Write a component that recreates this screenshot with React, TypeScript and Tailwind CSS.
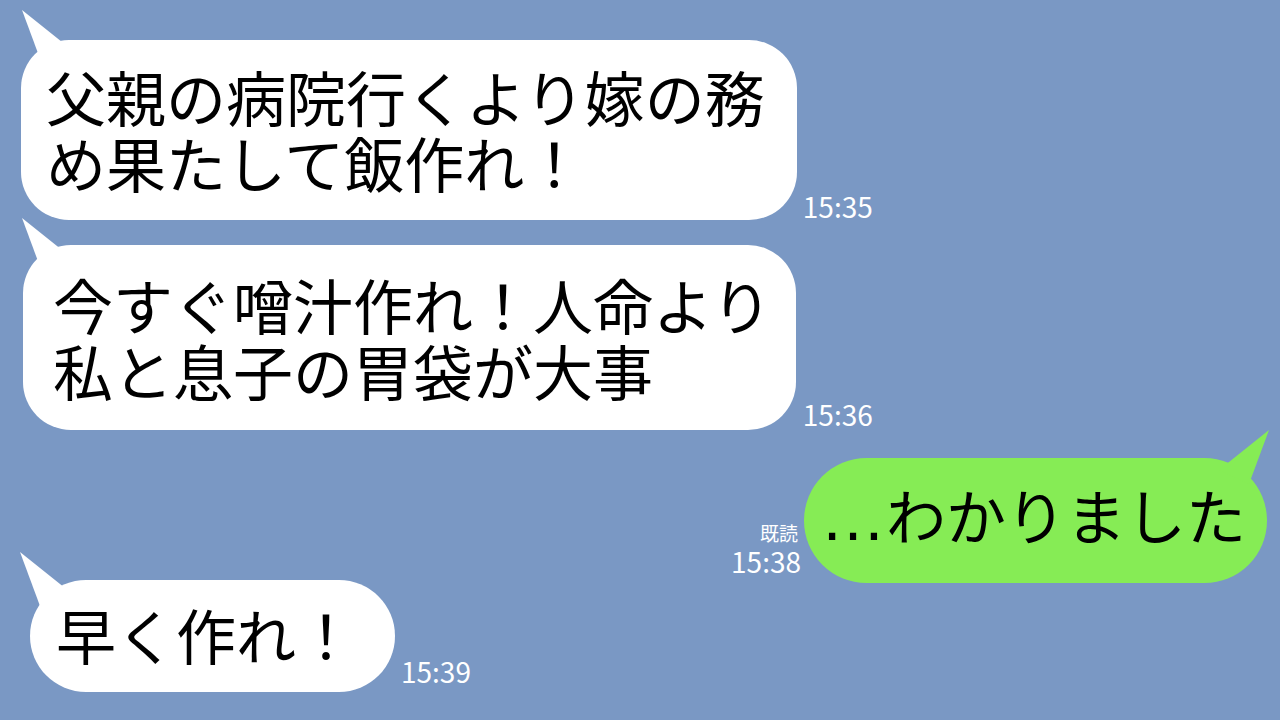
import React from 'react';

const LeftTail: React.FC<{ className: string }> = ({ className }) => (
  <svg className={`absolute ${className}`} width="60" height="60" viewBox="0 0 60 60">
    <polygon points="0,0 20,54 50,40" fill="#ffffff" />
  </svg>
);

const RightTail: React.FC<{ className: string }> = ({ className }) => (
  <svg className={`absolute ${className}`} width="60" height="60" viewBox="0 0 60 60">
    <polygon points="60,0 40,54 10,40" fill="#86ec55" />
  </svg>
);

const Time: React.FC<{ children: React.ReactNode; className?: string }> = ({ children, className = '' }) => (
  <span className={`text-[28px] leading-none text-white ${className}`}>{children}</span>
);

export default function App() {
  return (
    <div
      className="w-[1280px] h-[720px] overflow-hidden bg-[#7a98c4] text-black"
      style={{ fontFamily: "'Noto Sans CJK JP', 'Noto Sans', sans-serif" }}
      lang="ja"
    >
      {/* 1 */}
      <div className="flex items-end gap-[6px] pl-[21px] pt-[40px]">
        <div className="relative bg-white rounded-[48px] pl-[25px] pr-[32px] pt-[23px] pb-[25px] text-[60px] leading-[66px] whitespace-nowrap">
          <LeftTail className="left-[1px] top-[-30px]" />
          <span className="relative">父親の病院行くより嫁の務<br />め果たして飯作れ！</span>
        </div>
        <Time>15:35</Time>
      </div>

      {/* 2 */}
      <div className="flex items-end gap-[7px] pl-[23px] mt-[25px]">
        <div className="relative bg-white rounded-[48px] pl-[30px] pr-[24px] pt-[26px] pb-[27px] text-[60px] leading-[66px] whitespace-nowrap">
          <LeftTail className="left-[-1px] top-[-27px]" />
          <span className="relative">今すぐ噌汁作れ！人命より<br />私と息子の胃袋が大事</span>
        </div>
        <Time className="mb-[2px]">15:36</Time>
      </div>

      {/* 3 */}
      <div className="flex justify-end items-end gap-[3px] pr-[13px] mt-[28px]">
        <div className="flex flex-col items-end mb-[8px]">
          <span className="text-[19px] leading-none text-white mr-[3px] mb-[5px]">既読</span>
          <Time>15:38</Time>
        </div>
        <div className="relative bg-[#86ec55] rounded-full pl-[16px] pr-[21px] pt-[23px] pb-[36px] text-[60px] leading-[66px] whitespace-nowrap">
          <RightTail className="right-[-2px] top-[-28px]" />
          <span className="relative">
            <span className="text-[66px] leading-[40px]" style={{ fontFamily: "'Liberation Sans', Arial, sans-serif" }}>…</span>わかりました
          </span>
        </div>
      </div>

      {/* 4 */}
      <div className="flex items-end gap-[6px] pl-[30px] mt-[-3px]">
        <div className="relative bg-white rounded-full pl-[26px] pr-[39px] pt-[21px] pb-[25px] text-[60px] leading-[66px] whitespace-nowrap">
          <LeftTail className="left-[-10px] top-[-28px]" />
          <span className="relative">早く作れ！</span>
        </div>
        <Time className="mb-[7px]">15:39</Time>
      </div>
    </div>
  );
}
